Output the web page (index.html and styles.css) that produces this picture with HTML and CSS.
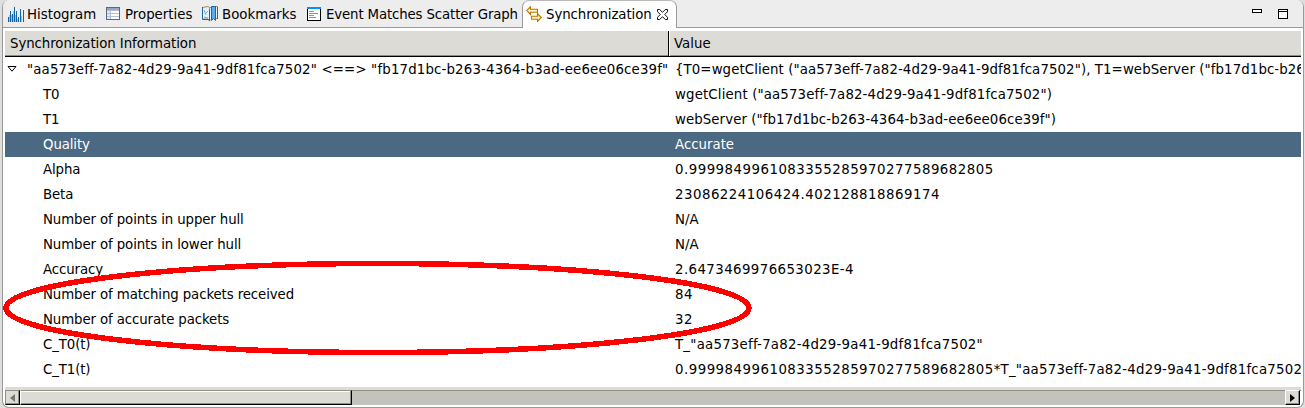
FILE: index.html
```
<!DOCTYPE html>
<html lang="en">
<head>
<meta charset="utf-8">
<title>Synchronization</title>
<link rel="stylesheet" href="styles.css">
</head>
<body>
<main class="view">
  <header class="tabs">
    <div class="tab histogram">
      <svg class="icon" width="16" height="16" viewBox="0 0 16 16" shape-rendering="crispEdges"><path d="M.5 16V11M2.500 16V5M4.500 16V8M6.500 16V1M8.500 16V5M10.500 16V11M12.500 16V3M15.500 16V4" stroke="#1264aa"/><path d="M1.500 16V9M3.500 16V9M5.500 16V5M7.500 16V9M9.500 16V13M13.500 16V10" stroke="#8fc0e8"/></svg>
      <span>Histogram</span>
    </div>
    <div class="tab properties">
      <svg class="icon" width="16" height="16" viewBox="0 0 16 16" shape-rendering="crispEdges"><path d="M.5 1.500h13v12h-13z" fill="#fff" stroke="#576987"/><path d="M1 2h12v2H1z" fill="#91a7cb"/><path d="M1 4h4v9H1z" fill="#dce6f5"/><path d="M1 4.500h12M1 7.500h12M1 10.500h12M4.500 4v9" stroke="#b2bfd5"/></svg>
      <span>Properties</span>
    </div>
    <div class="tab bookmarks">
      <svg class="icon" width="16" height="16" viewBox="0 0 16 16"><path d="M.5 1.500 6 .5l2 1.500L10 .5h5.500v12H10l-2 2L6 13H.5z" fill="#e3f3fc" stroke="#b08a3c"/><path d="M.5 1v12.500H6l2 1.500M7.500 2.500v12M15.500 1v12" stroke="#25659d" fill="none"/><path d="m2 4 2 5M3 8l3-3M2 11l4 1" stroke="#80adc4" fill="none"/><path d="M9.500.5h4v14l-2-2-2 2z" fill="#5caaf2" stroke="#1765ad"/></svg>
      <span>Bookmarks</span>
    </div>
    <div class="tab scatter">
      <svg class="icon" width="16" height="16" viewBox="0 0 16 16" shape-rendering="crispEdges"><path d="M.5 1.500h13v13H.5z" fill="#fff" stroke="#000"/><path d="M0 1h14v2H0z" fill="#0090ff"/><path d="M2 5.500h5M2 7.500h9M2 9.500h5M2 11.500h7" stroke="#929292"/></svg>
      <span>Event Matches Scatter Graph</span>
    </div>
    <div class="tab active">
      <svg class="icon" width="16" height="16" viewBox="0 0 16 16"><path d="M.7 4.500 4.500.8v2.500h7v3h-7v2.200zM15.300 11.500 11.500 7.700v2.600h-6v3h6v2.200z" fill="#fff3bd" stroke="#b87504" stroke-width="1.100"/></svg>
      <span>Synchronization</span>
      <svg class="close" width="11" height="11" viewBox="0 0 11 11"><path d="M.5.500h2.200l2.800 2.800L8.300.500h2.200v2.200L7.700 5.500l2.800 2.800v2.200H8.300L5.500 7.700l-2.800 2.800H.5V8.300l2.800-2.800L.5 2.700z" fill="#fff" stroke="#111"/></svg>
    </div>
    <div class="window-tools">
      <svg width="36" height="12" viewBox="0 0 36 12" fill="#fff" stroke="#000" shape-rendering="crispEdges"><path d="M.5.500h9v3h-9zM26.500.500h9v9h-9zM27 2.500h8"/></svg>
    </div>
  </header>
  <section class="tree">
    <div class="row heading"><div class="name">Synchronization Information</div><div class="value">Value</div></div>
    <div class="row parent"><div class="name"><svg class="twisty" width="10" height="7" viewBox="0 0 10 7"><path d="M1 .5h8L5 5.200z" fill="#fff" stroke="#000"/></svg><span>"aa573eff-7a82-4d29-9a41-9df81fca7502" &lt;==&gt; "fb17d1bc-b263-4364-b3ad-ee6ee06ce39f"</span></div><div class="value">{T0=wgetClient ("aa573eff-7a82-4d29-9a41-9df81fca7502"), T1=webServer ("fb17d1bc-b26</div></div>
    <div class="row"><div class="name">T0</div><div class="value client">wgetClient ("aa573eff-7a82-4d29-9a41-9df81fca7502")</div></div>
    <div class="row"><div class="name">T1</div><div class="value server">webServer ("fb17d1bc-b263-4364-b3ad-ee6ee06ce39f")</div></div>
    <div class="row selected"><div class="name">Quality</div><div class="value">Accurate</div></div>
    <div class="row"><div class="name">Alpha</div><div class="value number">0.9999849961083355285970277589682805</div></div>
    <div class="row"><div class="name">Beta</div><div class="value number">23086224106424.402128818869174</div></div>
    <div class="row"><div class="name">Number of points in upper hull</div><div class="value">N/A</div></div>
    <div class="row"><div class="name">Number of points in lower hull</div><div class="value">N/A</div></div>
    <div class="row"><div class="name">Accuracy</div><div class="value number exponent">2.6473469976653023E-4</div></div>
    <div class="row"><div class="name">Number of matching packets received</div><div class="value number">84</div></div>
    <div class="row"><div class="name">Number of accurate packets</div><div class="value number">32</div></div>
    <div class="row"><div class="name">C_T0(t)</div><div class="value trace">T_"aa573eff-7a82-4d29-9a41-9df81fca7502"</div></div>
    <div class="row"><div class="name">C_T1(t)</div><div class="value formula"><span class="number">0.9999849961083355285970277589682805</span>*T_"aa573eff-7a82-4d29-9a41-9df81fca7502</div></div>
  </section>
  <div class="scrollbar">
    <div class="arrow left"><svg width="5" height="8" viewBox="0 0 5 8"><path d="M5 0v8L0 4z" fill="#777670"/></svg></div>
    <div class="thumb"></div>
    <div class="trough"></div>
    <div class="arrow right"><svg width="5" height="8" viewBox="0 0 5 8"><path d="M0 0v8l5-4z"/></svg></div>
  </div>
</main>
<svg class="highlight" width="760" height="104" viewBox="0 0 760 104"><ellipse cx="377.500" cy="52" rx="371.500" ry="44.500" fill="none" stroke="#f00" stroke-width="5.500" shape-rendering="crispEdges"/></svg>
</body>
</html>
```
FILE: styles.css
```
* { box-sizing: border-box; }
body {
  margin: 0;
  width: 1305px;
  height: 408px;
  padding: 0 1px 0 2px;
  overflow: hidden;
  background: #dedede;
  color: #000;
  font: 13.333px/25px "DejaVu Sans", sans-serif;
}
svg { display: block; flex: none; }
.view {
  height: 408px;
  border: 1px solid #999;
  border-top: 0;
  border-radius: 7px;
  padding: 0 2px;
  background: #fff;
  overflow: hidden;
}
.tabs {
  display: flex;
  height: 28px;
  margin: 0 -2px;
  padding-left: 4px;
  border-bottom: 1px solid #999;
  background: #ededed;
}
.tab {
  display: flex;
  flex: none;
  height: 28px;
  white-space: nowrap;
  line-height: 29px;
}
.icon { margin-top: 6px; margin-right: 4px; }
.histogram { width: 98px; }
.properties { width: 97px; }
.bookmarks { width: 104px; }
.scatter { width: 216px; letter-spacing: -.14px; }
.histogram .icon,
.properties .icon,
.scatter .icon { margin-left: 1px; margin-right: 3px; }
.active {
  width: 155px;
  padding-left: 3px;
  border: 1px solid #999;
  border-top-color: #bbb;
  border-bottom: 0;
  border-radius: 7px 7px 0 0;
  background: #fff;
  line-height: 27px;
  letter-spacing: -.07px;
}
.active .icon { margin-top: 5px; }
.close { margin: 8px 0 0 5px; }
.window-tools { margin: 9px 15px 0 auto; }
.tree { padding-top: 3px; height: 359px; overflow: hidden; }
.row { display: flex; height: 25px; white-space: nowrap; }
.name {
  width: 663px;
  flex: none;
  padding-left: 38px;
  overflow: hidden;
  letter-spacing: -.11px;
}
.value { flex: 1; min-width: 0; padding-left: 7px; overflow: hidden; }
.heading {
  height: 26px;
  background: #dcdbd6;
  border-bottom: 1px solid #000;
  box-shadow: inset 0 -1px #8e8d86;
}
.heading .name {
  width: 664px;
  padding-left: 5px;
  border-right: 1px solid #000;
  letter-spacing: -.07px;
}
.heading .value { padding-left: 5px; box-shadow: inset 1px 0 #fff; }
.parent .name { display: flex; padding-left: 2px; letter-spacing: .16px; }
.parent .value { letter-spacing: .09px; }
.twisty { margin: 9px 10px 0 0; }
.selected { background: #4b6983; color: #fff; }
.client { letter-spacing: .14px; }
.server { letter-spacing: .08px; }
.number { letter-spacing: .49px; }
.exponent { letter-spacing: .42px; }
.trace, .formula { letter-spacing: .23px; }
.scrollbar {
  display: flex;
  height: 18px;
  padding-right: 1px;
  border-top: 3px solid #dcdbd6;
  box-shadow: inset 0 1px #8e8d86;
}
.arrow {
  display: flex;
  align-items: center;
  justify-content: center;
  width: 15px;
  height: 15px;
  background: #dcdbd6;
  border: 1px solid #fff;
  border-right-color: #000;
  border-bottom-color: #000;
  box-shadow: inset -1px -1px #8e8d86;
}
.left { border-top-color: #8e8d86; border-left-color: #8e8d86; }
.thumb {
  width: 332px;
  height: 15px;
  background: #dcdbd6;
  border: 1px solid #fff;
  border-top-color: #8e8d86;
  border-right-color: #000;
  border-bottom-color: #000;
  box-shadow: inset -1px -1px #8e8d86, inset 0 1px #fff;
}
.trough { flex: 1; height: 15px; background: #c3c2bd; border-top: 1px solid #8e8d86; }
.highlight { position: absolute; left: 0; top: 256px; }
```
